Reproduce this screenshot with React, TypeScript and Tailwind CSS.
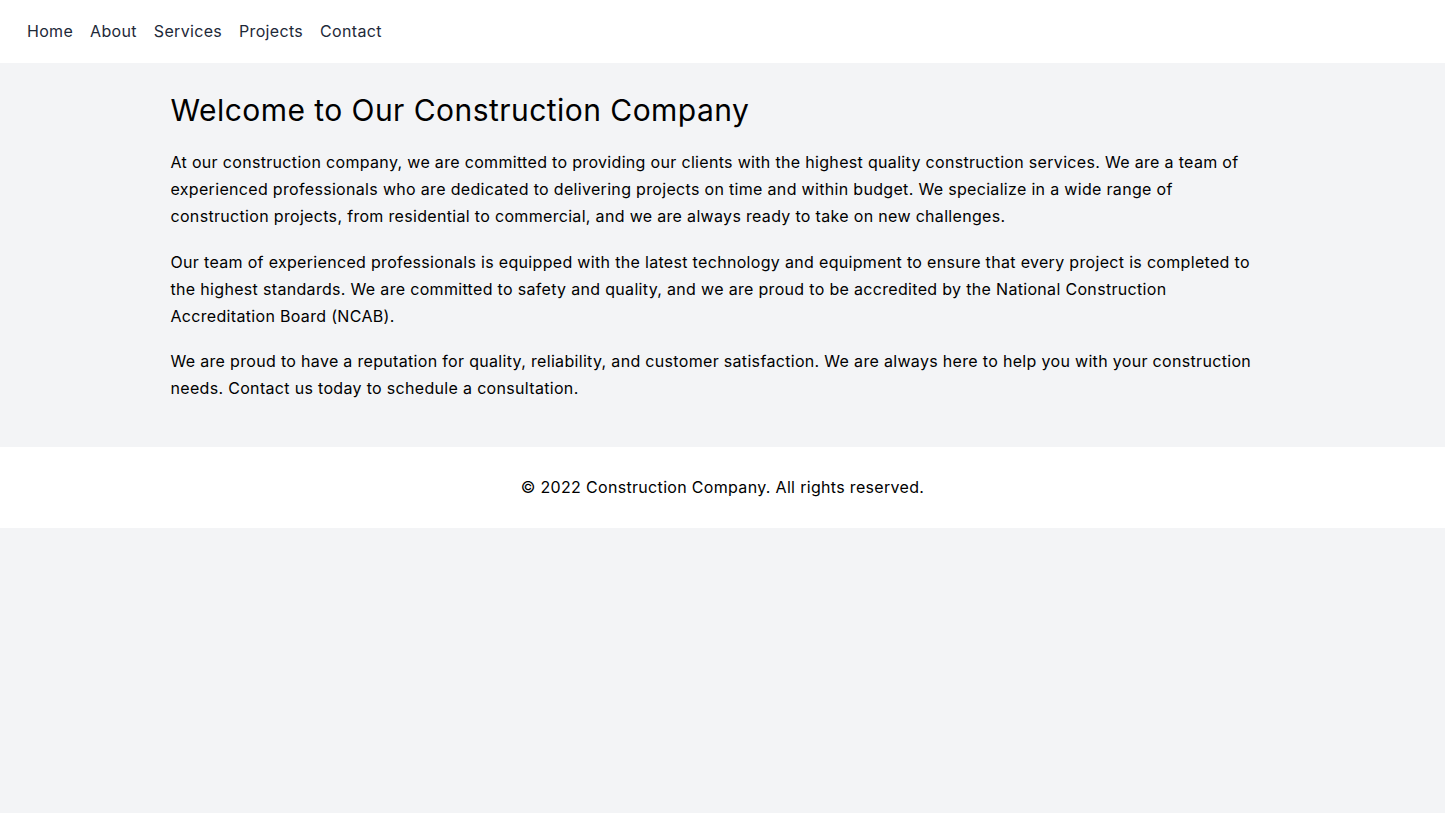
export default function App() {
  const links = ['Home', 'About', 'Services', 'Projects', 'Contact'];

  return (
    <div className="min-h-screen bg-gray-100 text-black font-['Inter',sans-serif] tracking-[0.02em]">
      <nav className="bg-white px-[27px] py-5">
        <ul className="flex gap-[17px] text-gray-800 leading-[23px]">
          {links.map((link) => (
            <li key={link}>
              <a href="#">{link}</a>
            </li>
          ))}
        </ul>
      </nav>

      <main className="max-w-6xl mx-auto px-6 pt-[29px] pb-7">
        <h1 className="text-3xl mb-[21px] tracking-[0.015em]">Welcome to Our Construction Company</h1>
        <p className="mb-[19px] leading-[27px]">
          At our construction company, we are committed to providing our clients with the highest quality construction services. We are a team of experienced professionals who are dedicated to delivering projects on time and within budget. We specialize in a wide range of construction projects, from residential to commercial, and we are always ready to take on new challenges.
        </p>
        <p className="mb-[18px] leading-[27px]">
          Our team of experienced professionals is equipped with the latest technology and equipment to ensure that every project is completed to the highest standards. We are committed to safety and quality, and we are proud to be accredited by the National Construction Accreditation Board (NCAB).
        </p>
        <p className="mb-[17px] leading-[27px]">
          We are proud to have a reputation for quality, reliability, and customer satisfaction. We are always here to help you with your construction needs. Contact us today to schedule a consultation.
        </p>
      </main>

      <footer className="bg-white pt-7 pb-[29px] text-center">
        <p>© 2022 Construction Company. All rights reserved.</p>
      </footer>
    </div>
  );
}
